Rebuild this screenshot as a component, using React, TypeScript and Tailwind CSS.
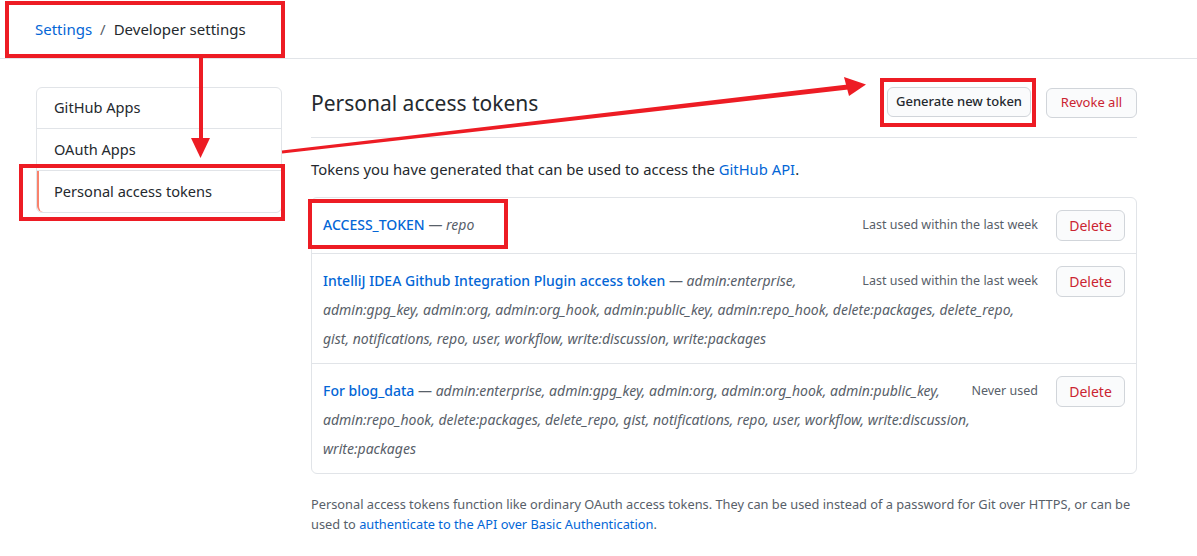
import React from "react";

const tokens = [
  {
    name: "ACCESS_TOKEN",
    scopes: "repo",
    lastUsed: "Last used within the last week",
  },
  {
    name: "IntelliJ IDEA Github Integration Plugin access token",
    scopes:
      "admin:enterprise, admin:gpg_key, admin:org, admin:org_hook, admin:public_key, admin:repo_hook, delete:packages, delete_repo, gist, notifications, repo, user, workflow, write:discussion, write:packages",
    lastUsed: "Last used within the last week",
  },
  {
    name: "For blog_data",
    scopes:
      "admin:enterprise, admin:gpg_key, admin:org, admin:org_hook, admin:public_key, admin:repo_hook, delete:packages, delete_repo, gist, notifications, repo, user, workflow, write:discussion, write:packages",
    lastUsed: "Never used",
  },
];

function Annotations() {
  return (
    <>
      <div className="pointer-events-none absolute left-[5px] top-[1px] h-[57px] w-[280px] border-[4px] border-[#ed1c24]" />
      <div className="pointer-events-none absolute left-[19px] top-[164px] h-[57px] w-[266px] border-[4px] border-[#ed1c24]" />
      <div className="pointer-events-none absolute left-[308px] top-[199px] h-[50px] w-[200px] border-[4px] border-[#ed1c24]" />
      <div className="pointer-events-none absolute left-[880px] top-[78px] h-[49px] w-[156px] border-[4px] border-[#ed1c24]" />
      <svg
        className="pointer-events-none absolute left-0 top-0"
        width="1197"
        height="556"
        viewBox="0 0 1197 556"
      >
        <rect x="199" y="57" width="4" height="84" fill="#ed1c24" />
        <polygon points="191,138 210,138 200.5,158" fill="#ed1c24" />
        <polygon
          points="282.1,153.4 281.9,150.6 847.7,84.5 848.3,89.5"
          fill="#ed1c24"
        />
        <polygon points="844,77 866,84.5 849,96" fill="#ed1c24" />
      </svg>
    </>
  );
}

export default function App() {
  return (
    <div className="relative h-[556px] w-[1197px] overflow-hidden bg-white font-['Noto_Sans',sans-serif] text-[#24292e]">
      <div className="flex h-[59px] items-center border-b border-[#e1e4e8] pl-[35px] text-[15px]">
        <a className="text-[#0366d6]">Settings</a>
        <span className="mx-[8px] text-[#586069]">/</span>
        <span>Developer settings</span>
      </div>

      <div className="flex gap-[29px] pl-[36px] pt-[28px]">
        <nav className="w-[246px] shrink-0 self-start rounded-md border border-[#e1e4e8] text-[14.6px]">
          <div className="flex h-[41px] items-center border-b border-[#e1e4e8] pl-[17px]">
            GitHub Apps
          </div>
          <div className="flex h-[42px] items-center border-b border-[#e1e4e8] pl-[17px]">
            OAuth Apps
          </div>
          <div className="flex h-[41px] items-center rounded-bl-md border-l-2 border-[#f9826c] pl-[15px]">
            Personal access tokens
          </div>
        </nav>

        <main className="w-[826px]">
          <div className="flex items-start justify-between border-b border-[#e1e4e8] pb-[19px]">
            <h2 className="pt-[1px] text-[21px] leading-[30px]">Personal access tokens</h2>
            <div className="flex gap-[15px]">
              <button className="h-[30px] w-[144px] rounded-md border border-[#d1d5da] bg-[#fafbfc] text-[13px] font-medium">
                Generate new token
              </button>
              <button className="mt-[1px] h-[30px] w-[91px] rounded-md border border-[#d1d5da] bg-[#fafbfc] text-[13px] text-[#cb2431]">
                Revoke all
              </button>
            </div>
          </div>

          <p className="mt-[21px] mb-[17px] text-[14.8px] leading-[21px]">
            Tokens you have generated that can be used to access the{" "}
            <a className="text-[#0366d6]">GitHub API</a>.
          </p>

          <div className="rounded-md border border-[#e1e4e8]">
            {tokens.map((t, i) => (
              <div
                key={t.name}
                className={`flex items-start px-[11px] pt-[12px] pb-[10px] ${
                  i > 0 ? "border-t border-[#e1e4e8]" : ""
                }`}
              >
                <div className="flex-1 text-[14px] leading-[29px]">
                  <span className="float-right ml-[16px] text-[12.5px] text-[#586069]">
                    {t.lastUsed}
                  </span>
                  <a className="font-medium text-[#0366d6]">{t.name}</a>
                  <span className="text-[#586069]"> — </span>
                  <em className="text-[#586069]">{t.scopes}</em>
                </div>
                <button className="mb-[2px] ml-[18px] h-[31px] w-[69px] shrink-0 rounded-md border border-[#d1d5da] bg-[#fafbfc] text-[14px] text-[#cb2431]">
                  Delete
                </button>
              </div>
            ))}
          </div>

          <p className="mt-[20px] text-[12.8px] leading-[20px] text-[#586069]">
            Personal access tokens function like ordinary OAuth access tokens. They can be used
            instead of a password for Git over HTTPS, or can be used to{" "}
            <a className="text-[#0366d6]">authenticate to the API over Basic Authentication</a>.
          </p>
        </main>
      </div>

      <Annotations />
    </div>
  );
}
